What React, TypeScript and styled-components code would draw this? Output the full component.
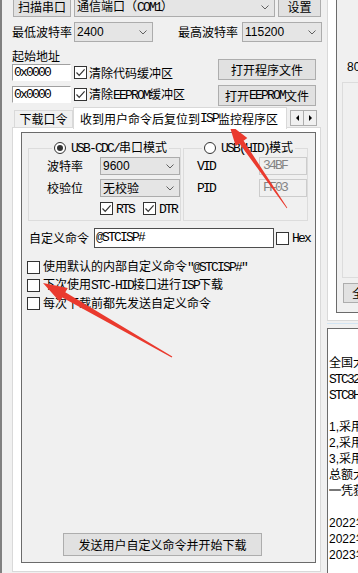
import React from 'react'
import styled, { createGlobalStyle } from 'styled-components'

const GlobalStyle = createGlobalStyle`
	html, body {
		margin: 0;
		padding: 0;
		background: #f0f0f0;
	}
	body {
		font-family: "Noto Sans CJK SC", "Noto Sans", sans-serif;
		font-size: 12px;
		line-height: 14px;
		color: #000;
	}
	* {
		box-sizing: border-box;
	}
`

const Screen = styled.div`
	position: relative;
	width: 358px;
	height: 573px;
	overflow: hidden;
	display: flex;
	background: #f0f0f0;
`

const LeftPane = styled.div`
	width: 322px;
	flex: none;
	display: flex;
	flex-direction: column;
	border-left: 2px solid #808080;
	padding-left: 10px;
`

// SimSun style half-width latin
const M = styled.span`
	font-family: "Liberation Mono", monospace;
	font-size: 13px;
	letter-spacing: -1.8px;
`

const N = styled.span`
	font-family: "Liberation Sans", Arial, sans-serif;
	font-size: 12px;
`

const TopRow = styled.div`
	display: flex;
	align-items: flex-end;
	gap: 3px;
	height: 20px;
	margin-top: -3px;
	padding-left: 1px;
`

const Button = styled.button<{ $w: number; $h?: number; $ml?: number }>`
	width: ${p => p.$w}px;
	height: ${p => p.$h ?? 21}px;
	margin: 0 0 0 ${p => p.$ml ?? 0}px;
	padding: 0;
	flex: none;
	display: flex;
	align-items: center;
	justify-content: center;
	background: #e1e1e1;
	border: 1px solid #adadad;
	font: inherit;
	color: #000;
	white-space: nowrap;
`

const Select = styled.div<{ $w: number; $h?: number; $ml?: number }>`
	width: ${p => p.$w}px;
	height: ${p => p.$h ?? 20}px;
	margin-left: ${p => p.$ml ?? 0}px;
	flex: none;
	display: flex;
	align-items: center;
	justify-content: space-between;
	padding: 0 5px 0 2px;
	background: #e5e5e5;
	border: 1px solid #acacac;
	white-space: nowrap;
`

const Chevron = () => (
	<svg width="8" height="5" viewBox="0 0 8 5">
		<path d="M0.5 0.5 L4 4 L7.5 0.5" fill="none" stroke="#606060" strokeWidth="1" />
	</svg>
)

const RateRow = styled.div`
	display: flex;
	align-items: center;
	height: 20px;
	margin-top: 5px;
`

const Label = styled.span<{ $ml?: number }>`
	margin-left: ${p => p.$ml ?? 0}px;
	white-space: nowrap;
	flex: none;
`

const AddrBlock = styled.div`
	display: flex;
	margin-top: 7px;
	height: 57px;
`

const AddrFields = styled.div`
	display: flex;
	flex-direction: column;
`

const Caption = styled.div`
	height: 15px;
`

const FieldRow = styled.div<{ $mt?: number }>`
	display: flex;
	align-items: center;
	height: 17px;
	margin-top: ${p => p.$mt ?? 0}px;
`

const Edit = styled.div<{ $w: number }>`
	width: ${p => p.$w}px;
	height: 17px;
	flex: none;
	display: flex;
	align-items: center;
	padding-left: 1px;
	background: #fff;
	border: 1px solid;
	border-color: #a0a0a0 #fff #fff #a0a0a0;
`

const AddrButtons = styled.div`
	display: flex;
	flex-direction: column;
	gap: 5px;
	margin-left: auto;
	margin-right: 6px;
	padding-top: 10px;
`

const BoxEl = styled.span<{ $ml?: number }>`
	width: 13px;
	height: 13px;
	flex: none;
	margin-left: ${p => p.$ml ?? 0}px;
	display: inline-flex;
	align-items: center;
	justify-content: center;
	background: #fff;
	border: 1px solid #333;
`

const Check = ({ on, ml }: { on?: boolean; ml?: number }) => (
	<BoxEl $ml={ml}>
		{on && (
			<svg width="11" height="11" viewBox="0 0 11 11">
				<path d="M1.5 5.5 L4.2 8.3 L9.6 2.4" fill="none" stroke="#333" strokeWidth="1.2" />
			</svg>
		)}
	</BoxEl>
)

const Radio = styled.span<{ $on?: boolean }>`
	width: 12px;
	height: 12px;
	flex: none;
	border-radius: 50%;
	border: 1px solid #333;
	background: #fff;
	display: inline-flex;
	align-items: center;
	justify-content: center;
	&::after {
		content: '';
		width: 6px;
		height: 6px;
		border-radius: 50%;
		background: ${p => (p.$on ? '#333' : 'transparent')};
	}
`

const TabStrip = styled.div`
	position: relative;
	z-index: 1;
	display: flex;
	align-items: flex-end;
	height: 22px;
	padding-left: 2px;
`

const Tab = styled.div<{ $active?: boolean; $w: number }>`
	width: ${p => p.$w}px;
	height: ${p => (p.$active ? 22 : 17)}px;
	margin-bottom: ${p => (p.$active ? -1 : 1)}px;
	flex: none;
	display: flex;
	align-items: center;
	justify-content: ${p => (p.$active ? 'flex-start' : 'center')};
	padding-left: ${p => (p.$active ? 6 : 0)}px;
	background: ${p => (p.$active ? '#fff' : '#f0f0f0')};
	border: 1px solid #d9d9d9;
	border-bottom: none;
	white-space: nowrap;
`

const TabScroll = styled.div`
	display: flex;
	align-self: flex-start;
	margin: 4px 0 0 3px;
`

const ScrollBtn = styled.div`
	width: 14px;
	height: 16px;
	display: flex;
	align-items: center;
	justify-content: center;
	background: #f0f0f0;
	border: 1px solid #adadad;
	& + & {
		margin-left: -1px;
	}
`

const TabPage = styled.div`
	width: 309px;
	flex: 1;
	display: flex;
	margin: -1px 0 1px;
	padding: 4px 6px 8px 8px;
	background: #fff;
	border: 1px solid #d9d9d9;
`

const Panel = styled.div`
	flex: 1;
	display: flex;
	flex-direction: column;
	padding: 8px 5px 6px 5px;
	background: #f0f0f0;
	border: 1px solid #6b6b6b;
`

const GroupRow = styled.div`
	display: flex;
	gap: 2px;
	margin-left: 1px;
`

const Group = styled.fieldset<{ $w: number; $pl: number }>`
	width: ${p => p.$w}px;
	min-width: 0;
	margin: 0;
	padding: 2px 0 5px ${p => p.$pl}px;
	border: 1px solid #dcdcdc;
`

const Legend = styled.legend`
	display: flex;
	align-items: center;
	gap: 5px;
	height: 14px;
	margin-left: 5px;
	padding: 0 2px;
	white-space: nowrap;
`

const GroupGrid = styled.div<{ $field: number; $gap: number }>`
	display: grid;
	grid-template-columns: auto ${p => p.$field}px;
	column-gap: ${p => p.$gap}px;
	row-gap: 4px;
	align-items: center;
	justify-items: start;
`

const Field = styled.div`
	width: 48px;
	height: 18px;
	display: flex;
	align-items: center;
	padding-left: 3px;
	background: #f0f0f0;
	border: 1px solid #cccccc;
	color: #838383;
`

const LineFlags = styled.div`
	grid-column: 2;
	display: flex;
	align-items: center;
	height: 13px;
	margin-top: 1px;
`

const CmdRow = styled.div`
	display: flex;
	align-items: center;
	height: 20px;
	margin: 7px 0 0 2px;
`

const CmdEdit = styled.div`
	width: 180px;
	height: 20px;
	flex: none;
	display: flex;
	align-items: center;
	margin-left: 5px;
	padding-left: 1px;
	background: #fff;
	border: 1px solid #4d4d4d;
`

const Options = styled.div`
	display: flex;
	flex-direction: column;
	margin-top: 10px;
`

const Option = styled.div`
	display: flex;
	align-items: center;
	gap: 3px;
	height: 18px;
	white-space: nowrap;
`

const SendButton = styled(Button)`
	align-self: flex-start;
	margin-top: auto;
`

const RightPane = styled.div`
	flex: 1;
	min-width: 0;
	display: flex;
	flex-direction: column;
	padding-left: 5px;
`

const SidePage = styled.div`
	height: 331px;
	flex: none;
	display: flex;
	margin-top: -10px;
	padding: 4px 0 7px 8px;
	background: #fff;
	border-left: 1px solid #d9d9d9;
	border-bottom: 1px solid #d9d9d9;
`

const SidePanel = styled.div`
	flex: 1;
	display: flex;
	flex-direction: column;
	padding-top: 64px;
	background: #f0f0f0;
	border: 1px solid #6b6b6b;
	border-right: none;
`

const Freq = styled.div`
	height: 14px;
	padding-left: 10px;
	white-space: nowrap;
`

const SideBox = styled.div`
	width: 120px;
	height: 196px;
	flex: none;
	margin: 9px 0 0 5px;
	background: #f0f0f0;
	border: 1px solid #dcdcdc;
`

const SideButton = styled(Button)`
	margin-top: 5px;
`

const Splitter = styled.div`
	height: 5px;
	flex: none;
	margin-top: 2px;
	border-top: 1px solid #d3e5f3;
`

const Notes = styled.div`
	flex: 1;
	padding: 25px 0 0 1px;
	background: #fff;
	border-left: 1px solid #6b6b6b;
	border-top: 1px solid #6b6b6b;
`

const NoteLine = styled.div`
	height: 16px;
	line-height: 16px;
	white-space: nowrap;
	overflow: hidden;
`

const Marks = styled.svg`
	position: absolute;
	left: 0;
	top: 0;
	pointer-events: none;
`

const notes: React.ReactNode[] = [
	'全国大学生电子设计竞赛指定单片机',
	<M>STC32G12K128-LQFP64</M>,
	<M>STC8H8K64U-LQFP64</M>,
	'',
	<><N>1,</N>采用STC32G12K128单片机</>,
	<><N>2,</N>采用STC8H8K64U单片机</>,
	<><N>3,</N>采用STC8H1K08单片机</>,
	'总额大于规定金额',
	'═凭获奖证书申请',
	'',
	<><N>2022</N>年全国大学生电子设计竞赛</>,
	<><N>2022</N>年全国大学生电子设计竞赛</>,
	<><N>2023</N>年全国大学生电子设计竞赛</>,
]

const App = () => (
	<Screen>
		<GlobalStyle />
		<LeftPane>
			<TopRow>
				<Button $w={58}>扫描串口</Button>
				<Select $w={201}>
					<span>通信端口（<M>COM1</M>）</span>
					<Chevron />
				</Select>
				<Button $w={43}>设置</Button>
			</TopRow>

			<RateRow>
				<Label>最低波特率</Label>
				<Select $w={79} $ml={2}>
					<N>2400</N>
					<Chevron />
				</Select>
				<Label $ml={25}>最高波特率</Label>
				<Select $w={80} $ml={4}>
					<N>115200</N>
					<Chevron />
				</Select>
			</RateRow>

			<AddrBlock>
				<AddrFields>
					<Caption>起始地址</Caption>
					<FieldRow>
						<Edit $w={59}><M>0x0000</M></Edit>
						<Check on ml={3} />
						<Label $ml={2}>清除代码缓冲区</Label>
					</FieldRow>
					<FieldRow $mt={5}>
						<Edit $w={59}><M>0x0000</M></Edit>
						<Check on ml={3} />
						<Label $ml={2}>清除<M>EEPROM</M>缓冲区</Label>
					</FieldRow>
				</AddrFields>
				<AddrButtons>
					<Button $w={98}>打开程序文件</Button>
					<Button $w={98}>打开<M>EEPROM</M>文件</Button>
				</AddrButtons>
			</AddrBlock>

			<TabStrip>
				<Tab $w={59}>下载口令</Tab>
				<Tab $w={214} $active>收到用户命令后复位到<M>ISP</M>监控程序区</Tab>
				<TabScroll>
					<ScrollBtn>
						<svg width="3" height="6" viewBox="0 0 3 6"><path d="M3 0 L0 3 L3 6 Z" fill="#000" /></svg>
					</ScrollBtn>
					<ScrollBtn>
						<svg width="3" height="6" viewBox="0 0 3 6"><path d="M0 0 L3 3 L0 6 Z" fill="#000" /></svg>
					</ScrollBtn>
				</TabScroll>
			</TabStrip>

			<TabPage>
				<Panel>
					<GroupRow>
						<Group $w={153} $pl={18}>
							<Legend>
								<Radio $on />
								<span><M>USB-CDC/</M>串口模式</span>
							</Legend>
							<GroupGrid $field={80} $gap={3}>
								<Label>波特率</Label>
								<Select $w={80} $h={18}>
									<N>9600</N>
									<Chevron />
								</Select>
								<Label>校验位</Label>
								<Select $w={80} $h={18}>
									<span>无校验</span>
									<Chevron />
								</Select>
								<LineFlags>
									<Check on />
									<Label $ml={3}><M>RTS</M></Label>
									<Check on ml={9} />
									<Label $ml={3}><M>DTR</M></Label>
								</LineFlags>
							</GroupGrid>
						</Group>
						<Group $w={125} $pl={13}>
							<Legend>
								<Radio />
								<span><M>USB(HID)</M>模式</span>
							</Legend>
							<GroupGrid $field={48} $gap={6}>
								<Label><M>VID</M></Label>
								<Field><M>34BF</M></Field>
								<Label><M>PID</M></Label>
								<Field><M>FF03</M></Field>
							</GroupGrid>
						</Group>
					</GroupRow>

					<CmdRow>
						<Label>自定义命令</Label>
						<CmdEdit><M>@STCISP#</M></CmdEdit>
						<Check ml={2} />
						<Label $ml={3}><M>Hex</M></Label>
					</CmdRow>

					<Options>
						<Option>
							<Check />
							<span>使用默认的内部自定义命令<M>"@STCISP#"</M></span>
						</Option>
						<Option>
							<Check />
							<span>下次使用<M>STC-HID</M>接口进行<M>ISP</M>下载</span>
						</Option>
						<Option>
							<Check />
							<span>每次下载前都先发送自定义命令</span>
						</Option>
					</Options>

					<SendButton $w={199} $h={23} $ml={36}>发送用户自定义命令并开始下载</SendButton>
				</Panel>
			</TabPage>
		</LeftPane>

		<RightPane>
			<SidePage>
				<SidePanel>
					<Freq><N>80.000MHz</N></Freq>
					<SideBox />
					<SideButton $w={66} $h={20} $ml={6}>全部清除</SideButton>
				</SidePanel>
			</SidePage>
			<Splitter />
			<Notes>
				{notes.map((n, i) => (
					<NoteLine key={i}>{n}</NoteLine>
				))}
			</Notes>
		</RightPane>

		<Marks width="358" height="573" viewBox="0 0 358 573">
			<polygon points="229,124 247.3,138.1 243.6,140.7 287.3,207.8 286.7,208.2 239.4,143.5 235.7,146.1" fill="#ea3a2e" />
			<polygon points="43,283 67.8,288 65.3,292.3 172.3,356.6 171.7,357.4 62.3,297.5 59.8,301.8" fill="#ea3a2e" />
		</Marks>
	</Screen>
)

export default App
